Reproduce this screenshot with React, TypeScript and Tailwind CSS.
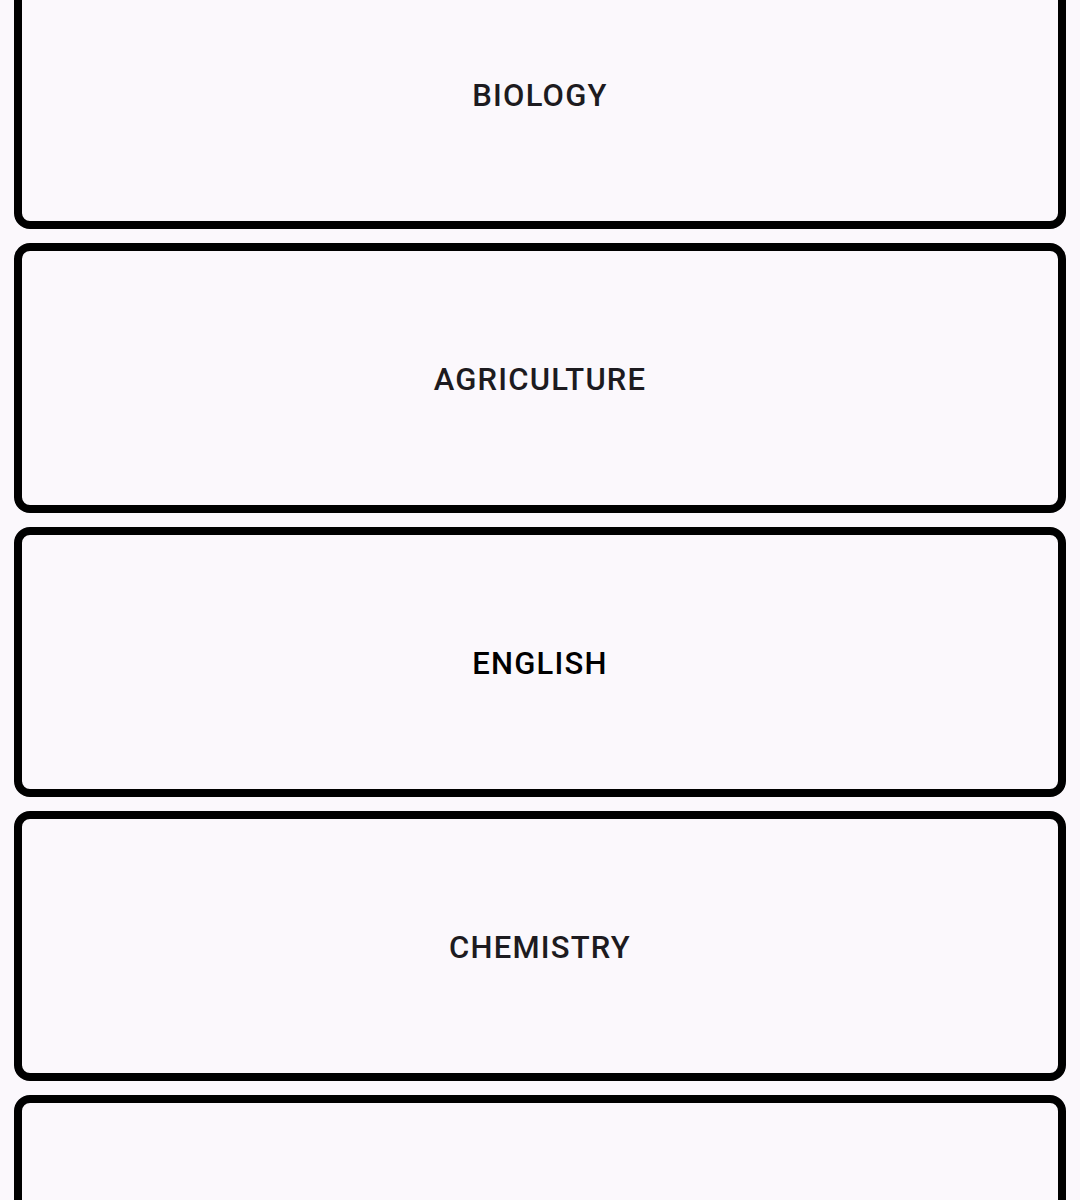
import React from "react";

const items = [
  { label: "BIOLOGY", color: "text-[#1d1b20]" },
  { label: "AGRICULTURE", color: "text-[#1d1b20]" },
  { label: "ENGLISH", color: "text-black" },
  { label: "CHEMISTRY", color: "text-[#1d1b20]" },
  { label: "", color: "text-[#1d1b20]" },
];

export default function App() {
  return (
    <div className="h-[1200px] w-[1080px] overflow-hidden bg-[#fbf8fc] font-['Roboto',sans-serif]">
      <div className="mt-[-41px] flex flex-col gap-[14px] px-[14px]">
        {items.map((it, i) => (
          <div
            key={i}
            className="flex h-[270px] shrink-0 items-center justify-center rounded-[16px] border-[8px] border-black bg-[#fbf8fc] pt-[4px]"
          >
            <span className={`text-[31px] font-medium tracking-[1.2px] ${it.color}`}>{it.label}</span>
          </div>
        ))}
      </div>
    </div>
  );
}
